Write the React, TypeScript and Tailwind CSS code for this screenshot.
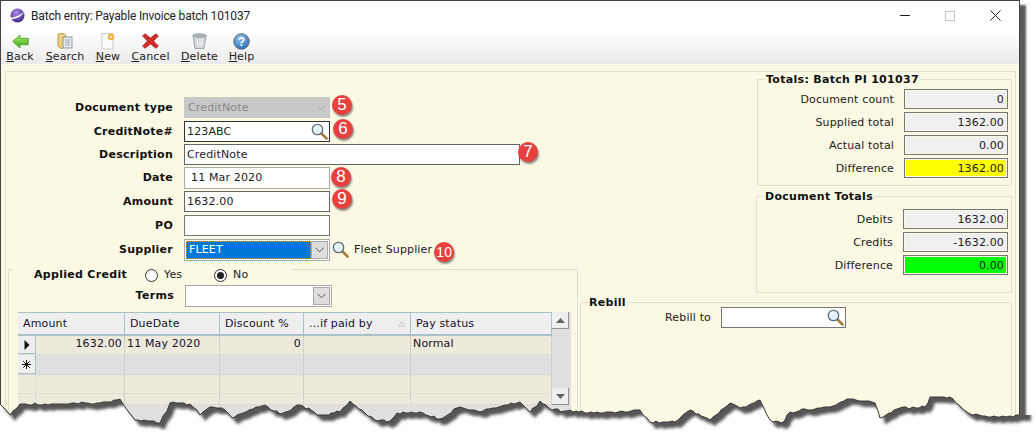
import React from 'react';

// rough outline of the torn bottom edge of the screenshot
const tearKnots: [number, number][] = [
  [0, 404], [10, 415], [20, 404], [60, 404], [100, 403], [120, 399], [125, 407], [135, 420], [160, 423], [170, 403],
  [190, 404], [200, 415], [210, 407], [225, 410], [232, 418], [240, 414], [265, 405], [280, 414], [300, 405], [320, 415],
  [340, 412], [350, 401], [365, 413], [375, 420], [390, 421], [397, 413], [420, 412], [440, 419], [460, 407], [480, 412],
  [505, 405], [520, 402], [530, 412], [540, 401], [552, 410], [600, 413], [640, 410], [650, 422], [675, 422], [690, 410],
  [710, 420], [730, 403], [740, 408], [760, 400], [770, 420], [782, 423], [790, 412], [830, 407], [850, 399], [875, 403],
  [880, 418], [900, 408], [925, 407], [930, 397], [950, 397], [970, 414], [1000, 417], [1019, 415],
];

const tearPoints = () => {
  const pts: [number, number][] = [];
  let n = 0;
  for (let i = 0; i < tearKnots.length - 1; i++) {
    const [x1, y1] = tearKnots[i];
    const [x2, y2] = tearKnots[i + 1];
    const steps = Math.max(1, Math.round((x2 - x1) / 3));
    for (let s = 0; s < steps; s++) {
      const t = s / steps;
      const r = Math.sin(++n * 12.9898) * 43758.5453;
      const noise = s === 0 ? 0 : (r - Math.floor(r)) * 2.4 - 1.2;
      pts.push([Math.round(x1 + (x2 - x1) * t), Math.round(y1 + (y2 - y1) * t + noise)]);
    }
  }
  pts.push(tearKnots[tearKnots.length - 1]);
  return pts;
};

const TornEdge = () => {
  const pts = tearPoints();
  const line = pts.map(p => p.join(',')).join(' ');
  const shifted = pts.map(([x, y]) => `${x + 5},${y + 6}`).join(' ');
  const white = `${line} 1036,415 1036,445 0,445`;
  return (
    <svg className="absolute inset-0 pointer-events-none" width="1036" height="445" viewBox="0 0 1036 445">
      <defs>
        <clipPath id="below">
          <polygon points={white} />
        </clipPath>
        <filter id="soft" x="-5%" y="-20%" width="110%" height="140%">
          <feGaussianBlur stdDeviation="1.6" />
        </filter>
      </defs>
      <polygon points={white} fill="#ffffff" />
      <g clipPath="url(#below)">
        <polygon points={`-5,380 1031,380 1031,421 ${shifted.split(' ').reverse().join(' ')}`} fill="#565656" filter="url(#soft)" />
      </g>
      <polyline points={line} fill="none" stroke="#3a3a3a" strokeWidth="1" />
    </svg>
  );
};

const Magnifier = ({ className = '' }: { className?: string }) => (
  <svg className={className} width="17" height="17" viewBox="0 0 17 17">
    <line x1="10.5" y1="10.5" x2="15.5" y2="15.5" stroke="#a67c3e" strokeWidth="2.6" strokeLinecap="round" />
    <circle cx="6.5" cy="6.5" r="5.2" fill="#e4f2fa" stroke="#5d6d78" strokeWidth="1.3" />
    <path d="M3.5 6 A3.2 3.2 0 0 1 6.5 3.2" fill="none" stroke="#ffffff" strokeWidth="1.2" />
  </svg>
);

const Chevron = ({ color = '#555' }: { color?: string }) => (
  <svg width="9" height="6" viewBox="0 0 9 6">
    <path d="M0.5 0.8 L4.5 4.8 L8.5 0.8" fill="none" stroke={color} strokeWidth="1" />
  </svg>
);

const Badge = ({ n, className = '' }: { n: number; className?: string }) => (
  <div className={`relative shrink-0 w-[20px] h-[20px] rounded-full bg-[#e8403f] text-white flex items-center justify-center font-['Liberation_Sans',sans-serif] tracking-normal shadow-[1px_2px_2px_rgba(0,0,0,0.45)] ${n === 10 ? 'text-[14px]' : 'text-[17px]'} ${className}`}>
    {n}
  </div>
);

const BackIcon = () => (
  <svg width="17" height="15" viewBox="0 0 17 15">
    <defs>
      <linearGradient id="backFill" x1="0" y1="0" x2="0" y2="1">
        <stop offset="0" stopColor="#a4ec62" />
        <stop offset="1" stopColor="#3fa81f" />
      </linearGradient>
    </defs>
    <path d="M0.7 7.5 L8 1 V4.3 H16.3 V10.7 H8 V14 Z" fill="url(#backFill)" stroke="#4b9a32" strokeWidth="0.8" />
  </svg>
);

const SearchIcon = () => (
  <svg width="16" height="16" viewBox="0 0 16 16">
    <path d="M1 1 L7 0.5 L9 3 V14 L4 15.5 L1 13 Z" fill="#ecd27c" stroke="#a58a3a" strokeWidth="0.8" />
    <rect x="6" y="4" width="9" height="11" fill="#e8ecef" stroke="#7c8790" strokeWidth="0.8" />
    <rect x="8" y="6" width="5" height="7" fill="#c3ccd3" />
  </svg>
);

const NewIcon = () => (
  <svg width="14" height="17" viewBox="0 0 14 17">
    <rect x="1" y="0.5" width="11" height="15.5" fill="#fbfbfb" stroke="#b9bec4" strokeWidth="0.8" />
    <circle cx="10" cy="4" r="3.2" fill="#f5b13e" />
    <circle cx="10" cy="4" r="1.3" fill="#fff2c8" />
  </svg>
);

const CancelIcon = () => (
  <svg width="17" height="16" viewBox="0 0 17 16">
    <path d="M3 0.8 L8.5 5 L14 0.8 L16.4 3 L11.5 8 L16.4 13 L14 15.3 L8.5 11 L3 15.3 L0.6 13 L5.5 8 L0.6 3 Z" fill="#d42a2a" stroke="#8e1c1c" strokeWidth="0.7" />
  </svg>
);

const DeleteIcon = () => (
  <svg width="15" height="16" viewBox="0 0 15 16">
    <path d="M1 2.5 H14 L12 15.5 H3 Z" fill="#d3dade" stroke="#8b969d" strokeWidth="0.8" />
    <ellipse cx="7.5" cy="2.5" rx="6.5" ry="1.8" fill="#aab4ba" stroke="#7f8a91" strokeWidth="0.6" />
    <path d="M5 6 L6 13 M8 6 L8 13 M10.5 6 L9.8 13" stroke="#f2f5f6" strokeWidth="1" />
  </svg>
);

const HelpIcon = () => (
  <svg width="17" height="17" viewBox="0 0 17 17">
    <defs>
      <radialGradient id="helpFill" cx="0.4" cy="0.3" r="0.8">
        <stop offset="0" stopColor="#8fc5ee" />
        <stop offset="1" stopColor="#1f67b0" />
      </radialGradient>
    </defs>
    <circle cx="8.5" cy="8.5" r="7.8" fill="url(#helpFill)" stroke="#63717c" strokeWidth="1" />
    <text x="8.5" y="13" textAnchor="middle" fontSize="12" fontWeight="700" fill="#ffffff" fontFamily="Liberation Sans, sans-serif">?</text>
  </svg>
);

const Logo = () => (
  <svg width="15" height="15" viewBox="0 0 15 15">
    <defs>
      <radialGradient id="logoFill" cx="0.4" cy="0.3" r="0.8">
        <stop offset="0" stopColor="#a98be0" />
        <stop offset="1" stopColor="#3a1c86" />
      </radialGradient>
    </defs>
    <circle cx="7.5" cy="7.5" r="7" fill="url(#logoFill)" />
    <path d="M0.5 9.5 C4 9.8 10 7.5 14.5 3.5 C12 8.5 5 11.5 1 10.8 Z" fill="#ffffff" />
  </svg>
);

const toolbarItems = [
  { key: 'B', rest: 'ack', icon: <BackIcon />, width: 'w-[28px]' },
  { key: 'S', rest: 'earch', icon: <SearchIcon />, width: 'w-[40px]' },
  { key: 'N', rest: 'ew', icon: <NewIcon />, width: 'w-[24px]' },
  { key: 'C', rest: 'ancel', icon: <CancelIcon />, width: 'w-[39px]' },
  { key: 'D', rest: 'elete', icon: <DeleteIcon />, width: 'w-[37px]' },
  { key: 'H', rest: 'elp', icon: <HelpIcon />, width: 'w-[25px]' },
];

const FieldRow = ({ label, mt, children }: { label: string; mt: string; children: React.ReactNode }) => (
  <div className={`flex items-center h-[21px] ${mt}`}>
    <div className="w-[165px] text-right font-bold tracking-[0.25px] text-[#111] whitespace-nowrap">{label}</div>
    <div className="ml-[11px] flex items-center">{children}</div>
  </div>
);

const TotalRow = ({ label, value, fill = 'bg-[#f0f0f0]', mt = 'mt-[3px]' }: { label: string; value: string; fill?: string; mt?: string }) => (
  <div className={`flex items-center h-[20px] ${mt}`}>
    <div className="w-[136px] mt-px text-right text-[#222] whitespace-nowrap">{label}</div>
    <div className="ml-[10px] flex-1 h-full border border-[#777] p-px">
      <div className={`h-full ${fill} text-right pr-[2px] leading-[18px] text-[#222]`}>{value}</div>
    </div>
  </div>
);

const columns = [
  { title: 'Amount', w: 'w-[107px]' },
  { title: 'DueDate', w: 'w-[95px]' },
  { title: 'Discount %', w: 'w-[84px]' },
  { title: '...if paid by', w: 'w-[107px]' },
  { title: 'Pay status', w: 'w-[141px]' },
];

const cellW = ['w-[89px]', 'w-[95px]', 'w-[84px]', 'w-[107px]', 'w-[141px]'];

const GridRow = ({ cells, marker, fill, h }: { cells: string[]; marker?: React.ReactNode; fill: string; h: string }) => (
  <div className={`flex ${h} ${fill} border-b border-dotted border-[#cfcfcf]`}>
    {marker ? (
      <div className="w-[18px] shrink-0 bg-[#efefef] border-r border-b border-[#a9c0c4] flex items-center justify-center">{marker}</div>
    ) : (
      <div className="w-[18px] shrink-0 border-r border-dotted border-[#cfcfcf]" />
    )}
    {cellW.map((w, i) => (
      <div key={w + i} className={`${w} shrink-0 px-[2px] leading-[15px] text-[#20102e] border-r border-dotted border-[#bdbdbd] ${i === 0 || i === 2 ? 'text-right' : ''}`}>
        {cells[i]}
      </div>
    ))}
  </div>
);

const ScrollButton = ({ up }: { up?: boolean }) => (
  <div className="w-[17px] h-[17px] bg-[#efefef] border-r border-b border-[#8f8f8f] flex items-center justify-center">
    <svg width="9" height="5" viewBox="0 0 9 5">
      <path d={up ? 'M0 5 L4.5 0 L9 5 Z' : 'M0 0 L4.5 5 L9 0 Z'} fill="#666" />
    </svg>
  </div>
);

const Radio = ({ on }: { on?: boolean }) => (
  <div className="w-[13px] h-[13px] rounded-full border border-[#333] bg-white flex items-center justify-center">
    {on && <div className="w-[7px] h-[7px] rounded-full bg-[#222]" />}
  </div>
);

export default function App() {
  return (
    <div className="relative w-[1036px] h-[445px] overflow-hidden bg-white font-['DejaVu_Sans',sans-serif] text-[11px] leading-[14px] tracking-[0.15px]">
      <div className="w-[1020px] h-[445px] border-l border-t border-r border-[#444] bg-white flex flex-col shadow-[6px_5px_2px_#5c5c5c]">
        {/* title bar */}
        <div className="h-[29px] shrink-0 flex items-center pl-[9px] pr-[18px]">
          <Logo />
          <span className="ml-[6px] font-['Roboto',sans-serif] text-[12px] tracking-[-0.17px] text-[#222]">Batch entry: Payable Invoice batch 101037</span>
          <div className="ml-auto flex items-center">
            <div className="w-[10px] h-px bg-[#222]" />
            <div className="ml-[35px] w-[10px] h-[10px] border border-[#c4c4c4]" />
            <svg className="ml-[35px]" width="11" height="11" viewBox="0 0 11 11">
              <path d="M0.5 0.5 L10.5 10.5 M10.5 0.5 L0.5 10.5" stroke="#222" strokeWidth="1" />
            </svg>
          </div>
        </div>

        {/* toolbar */}
        <div className="h-[34px] shrink-0 flex gap-[11px] pl-[5px] pt-[2px] bg-gradient-to-b from-[#ffffff] to-[#ebebeb]">
          {toolbarItems.map(item => (
            <div key={item.key} className={`${item.width} flex flex-col items-center`}>
              <div className="h-[18px] flex items-center justify-center">{item.icon}</div>
              <div className="text-[#222] leading-[13px] whitespace-nowrap">
                <span className="underline">{item.key}</span>{item.rest}
              </div>
            </div>
          ))}
        </div>

        {/* content */}
        <div className="flex-1 bg-[#fbf8e3] pt-[7px] pl-[4px] pr-[3px] min-h-0">
          <div className="h-full border border-[#dfdfd6] pl-[2px] flex">
            {/* left column */}
            <div className="w-[570px] shrink-0 pt-[25px] flex flex-col">
              <FieldRow label="Document type" mt="">
                <div className="w-[146px] h-[21px] bg-[#c8c8c8] flex items-center pl-[4px] pr-[4px] pt-px text-[#888]">
                  <span>CreditNote</span>
                  <div className="ml-auto flex"><Chevron color="#aaa" /></div>
                </div>
                <Badge n={5} className="ml-[2px] -mt-[5px]" />
              </FieldRow>
              <FieldRow label="CreditNote#" mt="mt-[3px]">
                <div className="w-[146px] h-[21px] bg-white border border-[#333] flex items-center pl-[2px] pr-[1px] text-[#222]">
                  <span>123ABC</span>
                  <Magnifier className="ml-auto" />
                </div>
                <Badge n={6} className="ml-[3px] -mt-[6px]" />
              </FieldRow>
              <FieldRow label="Description" mt="mt-[2px]">
                <div className="w-[336px] h-[21px] bg-white border border-[#666] flex items-center pl-[2px] text-[#222]">CreditNote</div>
                <Badge n={7} className="-ml-[2px] -mt-[5px]" />
              </FieldRow>
              <FieldRow label="Date" mt="mt-[2px]">
                <div className="w-[146px] h-[22px] bg-white border border-[#aaa] flex items-center pl-[6px] text-[#222]">11 Mar 2020</div>
                <Badge n={8} className="ml-[1px] -mt-[1px]" />
              </FieldRow>
              <FieldRow label="Amount" mt="mt-[3px]">
                <div className="w-[146px] h-[21px] bg-white border border-[#666] flex items-center pl-[2px] text-[#222]">1632.00</div>
                <Badge n={9} className="ml-[2px] -mt-[5px]" />
              </FieldRow>
              <FieldRow label="PO" mt="mt-[3px]">
                <div className="w-[146px] h-[21px] bg-white border border-[#777]" />
              </FieldRow>
              <FieldRow label="Supplier" mt="mt-[3px]">
                <div className="w-[146px] h-[22px] bg-white border border-[#aaa] p-px flex">
                  <div className="flex-1 bg-[#0078d7] border border-dotted border-[#e8a33a] text-white pl-[2px] leading-[16px]">FLEET</div>
                  <div className="w-[17px] bg-[#dddddd] border border-[#aaa] flex items-center justify-center"><Chevron /></div>
                </div>
                <Magnifier className="ml-[2px] -mt-[1px]" />
                <span className="ml-[5px] text-[#222] whitespace-nowrap">Fleet Supplier</span>
                <Badge n={10} className="ml-[2px] mt-[5px]" />
              </FieldRow>

              {/* applied credit + grid */}
              <div className="mt-[9px] flex-1 border-t border-l border-r border-[#dfdfd6] min-h-0">
                <div className="-mt-[2px] ml-[4px] w-[278px] h-[14px] bg-[#fbf8e3] flex items-center">
                  <span className="ml-[21px] w-[111px] font-bold tracking-[0.3px] text-[#111] whitespace-nowrap">Applied Credit</span>
                  <Radio />
                  <span className="ml-[6px] w-[50px] text-[#222]">Yes</span>
                  <Radio on />
                  <span className="ml-[6px] text-[#222]">No</span>
                </div>
                <div className="mt-[3px] flex items-center h-[22px]">
                  <div className="w-[165px] text-right font-bold tracking-[0.3px] text-[#111]">Terms</div>
                  <div className="ml-[11px] w-[147px] h-[22px] bg-white border border-[#aaa] p-px flex justify-end">
                    <div className="w-[17px] bg-[#dddddd] border border-[#aaa] flex items-center justify-center"><Chevron /></div>
                  </div>
                </div>
                <div className="mt-[5px] ml-[9px] w-[553px] h-[200px] flex bg-[#e0e0e0]">
                  <div className="w-[534px] shrink-0">
                    <div className="flex h-[24px]">
                      {columns.map(c => (
                        <div key={c.title} className={`${c.w} shrink-0 relative bg-[#efefef] border-t border-r border-b-2 border-[#a9c0c4] pl-[5px] leading-[22px] text-[#20102e]`}>
                          {c.title}
                          {c.title.startsWith('...') && (
                            <svg className="absolute right-[5px] top-[8px]" width="7" height="6" viewBox="0 0 7 6">
                              <path d="M3.5 0.5 L6.5 5.5 H0.5 Z" fill="none" stroke="#cfcfcf" />
                            </svg>
                          )}
                        </div>
                      ))}
                    </div>
                    <GridRow
                      h="h-[19px]"
                      fill="bg-[#edeadb]"
                      marker={<svg width="6" height="10" viewBox="0 0 6 10"><path d="M0.5 0 L5.5 5 L0.5 10 Z" fill="#111" /></svg>}
                      cells={['1632.00', '11 May 2020', '0', '', 'Normal']}
                    />
                    <GridRow
                      h="h-[20px]"
                      fill="bg-[#e0e0e0]"
                      marker={
                        <svg width="9" height="9" viewBox="0 0 9 9">
                          <path d="M4.5 0 V9 M0 4.5 H9 M1.2 1.2 L7.8 7.8 M7.8 1.2 L1.2 7.8" stroke="#111" strokeWidth="1" />
                        </svg>
                      }
                      cells={['', '', '', '', '']}
                    />
                    <GridRow h="h-[19px]" fill="bg-[#edeadb]" cells={['', '', '', '', '']} />
                    <GridRow h="h-[11px]" fill="bg-[#edeadb]" cells={['', '', '', '', '']} />
                  </div>
                  <div className="w-[18px] h-[93px] flex flex-col justify-between">
                    <ScrollButton up />
                    <ScrollButton />
                  </div>
                </div>
              </div>
            </div>

            {/* right column */}
            <div className="ml-[2px] w-[432px] shrink-0 pt-[7px] flex flex-col">
              <div className="ml-auto w-[255px] h-[107px] border border-[#dfdfd6] pr-[3px]">
                <div className="-mt-[7px] ml-[7px] w-fit px-px bg-[#fbf8e3] font-bold tracking-[0.3px] text-[#111]">Totals: Batch PI 101037</div>
                <TotalRow label="Document count" value="0" mt="mt-[2px]" />
                <TotalRow label="Supplied total" value="1362.00" />
                <TotalRow label="Actual total" value="0.00" />
                <TotalRow label="Difference" value="1362.00" fill="bg-[#ffff00]" />
              </div>
              <div className="mt-[10px] ml-auto w-[256px] h-[97px] border border-[#dfdfd6] pr-[3px]">
                <div className="-mt-[7px] ml-[7px] w-fit px-px bg-[#fbf8e3] font-bold tracking-[0.3px] text-[#111]">Document Totals</div>
                <TotalRow label="Debits" value="1632.00" mt="mt-[5px]" />
                <TotalRow label="Credits" value="-1632.00" />
                <TotalRow label="Difference" value="0.00" fill="bg-[#00ff00]" />
              </div>
              <div className="mt-[9px] flex-1 border-t border-l border-r border-[#dfdfd6] min-h-0">
                <div className="-mt-[7px] ml-[7px] w-fit px-px bg-[#fbf8e3] font-bold tracking-[0.3px] text-[#111]">Rebill</div>
                <div className="flex items-center h-[21px] -mt-[3px]">
                  <div className="w-[130px] text-right text-[#222]">Rebill to</div>
                  <div className="ml-[10px] w-[125px] h-[21px] bg-white border border-[#777] flex justify-end items-center pr-px">
                    <Magnifier />
                  </div>
                </div>
              </div>
            </div>
          </div>
        </div>
      </div>
      <TornEdge />
    </div>
  );
}
